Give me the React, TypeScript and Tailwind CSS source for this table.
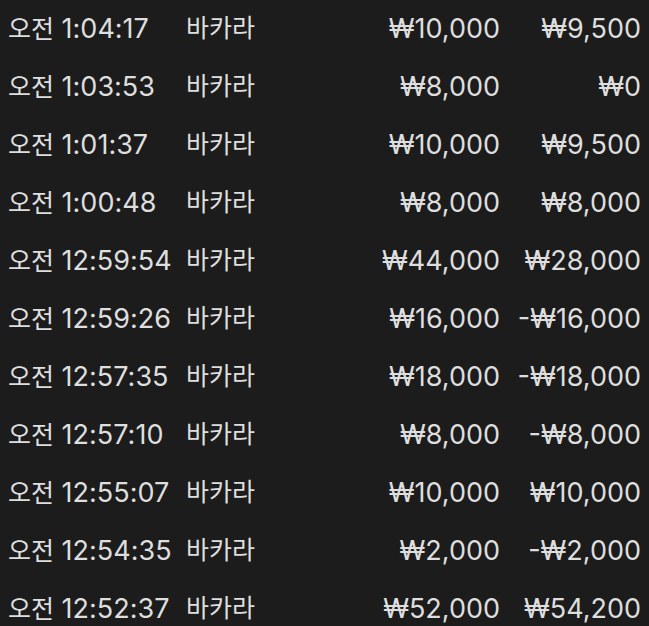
const ROWS = [
  ["1:04:17", "₩10,000", "₩9,500"],
  ["1:03:53", "₩8,000", "₩0"],
  ["1:01:37", "₩10,000", "₩9,500"],
  ["1:00:48", "₩8,000", "₩8,000"],
  ["12:59:54", "₩44,000", "₩28,000"],
  ["12:59:26", "₩16,000", "-₩16,000"],
  ["12:57:35", "₩18,000", "-₩18,000"],
  ["12:57:10", "₩8,000", "-₩8,000"],
  ["12:55:07", "₩10,000", "₩10,000"],
  ["12:54:35", "₩2,000", "-₩2,000"],
  ["12:52:37", "₩52,000", "₩54,200"],
];

export default function App() {
  return (
    <div
      className="h-[626px] w-[649px] overflow-hidden bg-[#1c1c1c] px-2 text-[27px] text-[#dedede]"
      style={{ fontFamily: 'Inter, "Noto Sans CJK KR", sans-serif' }}
    >
      {ROWS.map(([time, bet, result]) => (
        <div key={time} className="grid h-[58px] grid-cols-[178px_1fr_180px_141px] items-center whitespace-nowrap">
          <span>
            <span className="text-[25px]">오전</span> {time}
          </span>
          <span className="text-[25px]">바카라</span>
          <span className="text-right">{bet}</span>
          <span className="text-right">{result}</span>
        </div>
      ))}
    </div>
  );
}
